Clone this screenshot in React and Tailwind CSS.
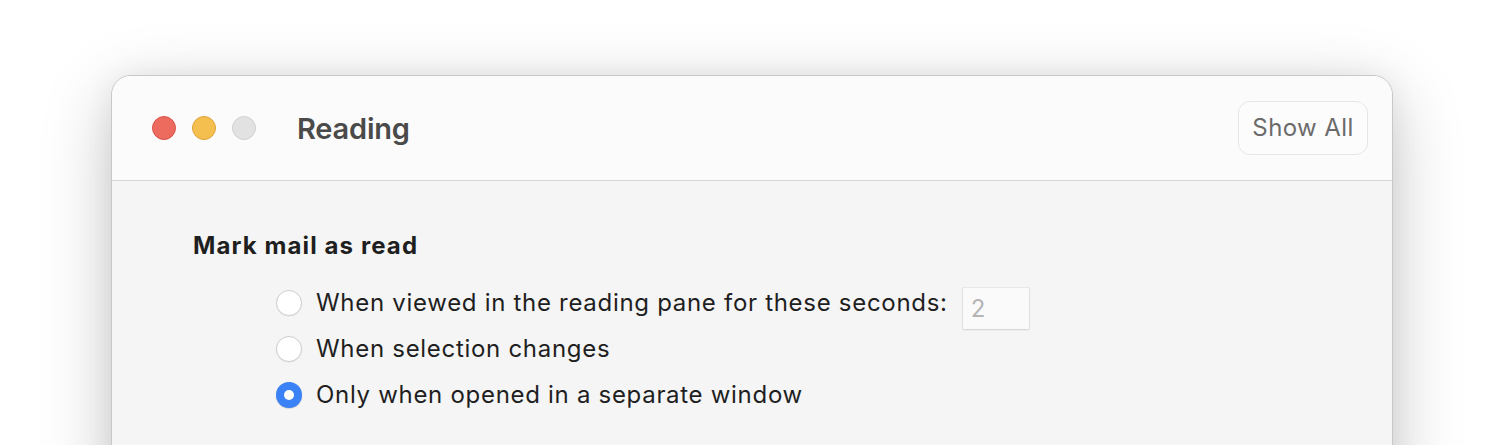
import React from "react";

function Radio({ checked }) {
  if (checked) {
    return (
      <span className="flex h-[26px] w-[26px] shrink-0 items-center justify-center rounded-full bg-[#3b82f6] shadow-[0_0.5px_1px_rgba(0,0,0,0.25)]">
        <span className="h-[10px] w-[10px] rounded-full bg-white" />
      </span>
    );
  }
  return (
    <span className="h-[26px] w-[26px] shrink-0 rounded-full border border-[#cfcfcf] bg-white shadow-[0_0.5px_1px_rgba(0,0,0,0.08)]" />
  );
}

export default function App() {
  return (
    <div
      className="h-[445px] w-full overflow-hidden bg-white pt-[75px]"
      style={{ fontFamily: "Inter, 'Noto Sans', sans-serif" }}
    >
      <div className="ml-[111px] h-[420px] w-[1282px] rounded-t-[20px] border border-[#c8c8c8] bg-[#f5f5f5] shadow-[0_20px_70px_rgba(0,0,0,0.22),0_0_30px_rgba(0,0,0,0.06)] overflow-hidden">
        <div className="flex h-[105px] items-center border-b border-[#d6d6d6] bg-[#fbfbfb] pl-[40px] pr-[24px]">
          <div className="flex items-center gap-[16px]">
            <span className="h-[24px] w-[24px] rounded-full border border-[#d9544b] bg-[#ec6a5e]" />
            <span className="h-[24px] w-[24px] rounded-full border border-[#dba43a] bg-[#f5bf4f]" />
            <span className="h-[24px] w-[24px] rounded-full border border-[#d0d0d0] bg-[#e2e2e2]" />
          </div>
          <div className="ml-[41px] text-[29px] font-semibold leading-none tracking-[-0.2px] text-[#4a4a4a]">
            Reading
          </div>
          <div className="ml-auto flex h-[54px] w-[130px] items-center justify-center rounded-[12px] border border-[#e6e6e6] bg-[#fcfcfc] text-[24px] leading-none tracking-[0.4px] text-[#6b6b6b]">
            Show All
          </div>
        </div>
        <div className="pl-[81px] pt-[50px]">
          <div className="text-[24px] font-bold leading-[30px] tracking-[1.1px] text-[#1f1f1f]">
            Mark mail as read
          </div>
          <div className="ml-[83px] mt-[29px] flex flex-col gap-[20px] tracking-[0.7px]">
            <div className="flex h-[26px] items-center">
              <Radio />
              <span className="ml-[14px] text-[24px] leading-none text-[#1f1f1f]">
                When viewed in the reading pane for these seconds:
              </span>
              <div className="ml-[15px] -mt-[2px] flex h-[41px] w-[66px] items-center self-start bg-[#fafafa] pl-[8px] text-[24px] leading-none text-[#b5b5b5] shadow-[0_0_0_1px_rgba(0,0,0,0.05),0_1px_2px_rgba(0,0,0,0.1)]">
                2
              </div>
            </div>
            <div className="flex h-[26px] items-center">
              <Radio />
              <span className="ml-[14px] text-[24px] leading-none text-[#1f1f1f]">
                When selection changes
              </span>
            </div>
            <div className="flex h-[26px] items-center">
              <Radio checked />
              <span className="ml-[14px] text-[24px] leading-none text-[#1f1f1f]">
                Only when opened in a separate window
              </span>
            </div>
          </div>
        </div>
      </div>
    </div>
  );
}
